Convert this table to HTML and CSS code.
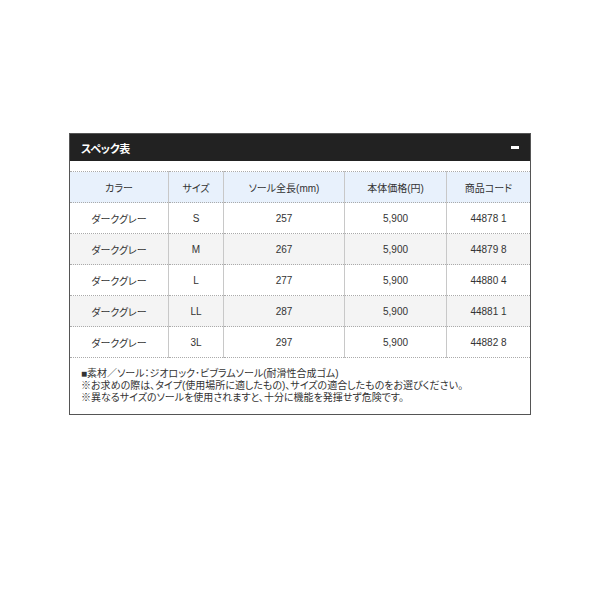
FILE: index.html
```html
<!DOCTYPE html>
<html lang="ja">
<head>
<meta charset="utf-8">
<link rel="stylesheet" href="styles.css">
</head>
<body>
<div class="panel">
  <div class="panel-head">
    <span class="panel-title">スペック表</span>
    <span class="toggle"></span>
  </div>
  <table class="spec">
    <thead>
      <tr><th class="c1">カラー</th><th class="c2">サイズ</th><th class="c3">ソール全長(mm)</th><th class="c4">本体価格(円)</th><th class="c5">商品コード</th></tr>
    </thead>
    <tbody>
      <tr><td>ダークグレー</td><td>S</td><td>257</td><td>5,900</td><td>44878 1</td></tr>
      <tr class="alt"><td>ダークグレー</td><td>M</td><td>267</td><td>5,900</td><td>44879 8</td></tr>
      <tr><td>ダークグレー</td><td>L</td><td>277</td><td>5,900</td><td>44880 4</td></tr>
      <tr class="alt"><td>ダークグレー</td><td>LL</td><td>287</td><td>5,900</td><td>44881 1</td></tr>
      <tr><td>ダークグレー</td><td>3L</td><td>297</td><td>5,900</td><td>44882 8</td></tr>
    </tbody>
  </table>
  <div class="notes">
    <p>■素材／ソール：ジオロック･ビブラムソール(耐滑性合成ゴム)</p>
    <p>※お求めの際は、タイプ(使用場所に適したもの)、サイズの適合したものをお選びください。</p>
    <p>※異なるサイズのソールを使用されますと、十分に機能を発揮せず危険です。</p>
  </div>
</div>
</body>
</html>
```

FILE: styles.css
```css
html, body {
  margin: 0;
  padding: 0;
  background: #fff;
}
body {
  font-family: "Liberation Sans", "Noto Sans CJK JP", sans-serif;
  color: #333;
}
.panel {
  width: 460px;
  margin: 133px 0 0 69px;
  border: 1px solid #555;
}
.panel-head {
  height: 27px;
  background: #222;
  display: flex;
  align-items: center;
  justify-content: space-between;
  padding: 0 11px 0 11px;
}
.panel-title {
  color: #fff;
  font-weight: bold;
  font-size: 11px;
  font-feature-settings: "palt";
  letter-spacing: -0.3px;
}
.toggle {
  width: 8px;
  height: 3px;
  background: #fff;
}
.spec {
  margin-top: 10px;
  width: 460px;
  border-collapse: collapse;
  table-layout: fixed;
  font-size: 10px;
  font-feature-settings: "palt";
}
.spec th, .spec td {
  height: 30px;
  padding: 0;
  text-align: center;
  font-weight: normal;
  border-top: 1px dotted #aaa;
  border-bottom: 1px dotted #aaa;
  border-left: 1px solid #c8c8c8;
  border-right: 1px solid #c8c8c8;
}
.spec th:first-child, .spec td:first-child { border-left: none; }
.spec th:last-child, .spec td:last-child { border-right: none; }
.spec th { background: #e8f1fc; }
.spec tr.alt td { background: #f4f4f4; }
.c1 { width: 98px; }
.c2 { width: 54px; }
.c3 { width: 120px; }
.c4 { width: 101px; }
.notes {
  padding: 10px 10px 10px 11px;
  font-size: 10px;
  line-height: 12px;
  font-feature-settings: "palt";
}
.notes p {
  margin: 0;
}
```
